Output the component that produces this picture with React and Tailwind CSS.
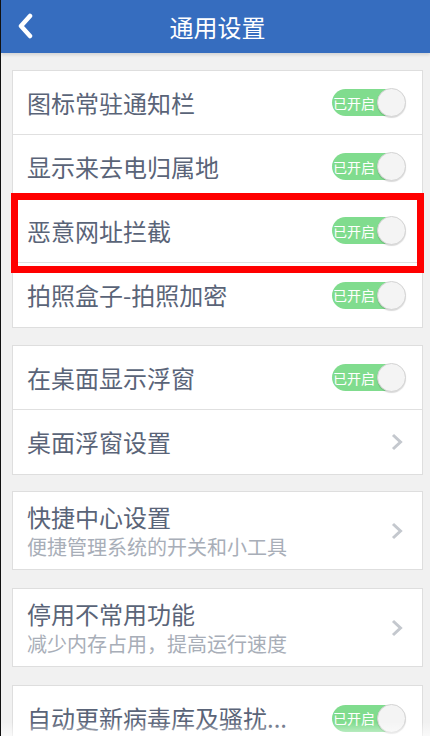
import React from "react";

const FONT = { fontFamily: '"Noto Sans CJK SC", "Noto Sans", sans-serif' };

function Toggle() {
  return (
    <div className="relative h-[29px] w-[74px]">
      <div className="absolute left-0 top-[1px] flex h-[27px] w-[72px] items-center rounded-full bg-[#80dc8e] pl-[1px]">
        <span className="text-[14px] leading-none text-white">已开启</span>
      </div>
      <div className="absolute right-0 top-0 h-[29px] w-[29px] rounded-full border border-[#d4d4d4] bg-[#f4f4f4] shadow-[0_1px_1px_rgba(0,0,0,0.15)]" />
    </div>
  );
}

function Chevron() {
  return (
    <svg width="14" height="18" viewBox="0 0 14 18" className="mr-[2px]">
      <path d="M3 2 L10.5 9 L3 16" fill="none" stroke="#c4c8ce" strokeWidth="3" />
    </svg>
  );
}

function Row({ title, sub, right, last }) {
  return (
    <div
      className={
        "flex items-center justify-between pl-[14px] pr-4 " +
        (sub ? "h-[77px] " : "h-[64px] ") +
        (last ? "" : "border-b border-[#e0e0e0]")
      }
    >
      <div className="flex flex-col gap-[4px]">
        <span className="text-[24px] leading-[28px] text-[#5a6478]">{title}</span>
        {sub && (
          <span className="text-[20px] leading-[24px] text-[#a8aeb8]">{sub}</span>
        )}
      </div>
      {right === "toggle" ? <Toggle /> : <Chevron />}
    </div>
  );
}

function Card({ children, className = "" }) {
  return (
    <div className={"ml-[11px] mr-[7px] border border-[#dedede] bg-white " + className}>
      {children}
    </div>
  );
}

export default function App() {
  return (
    <div
      className="relative h-[736px] w-[430px] overflow-hidden border-l-[1px] border-[#111] bg-[#f1f1f1]"
      style={FONT}
    >
      {/* header */}
      <div className="relative z-10 flex h-[53px] items-center justify-center bg-[#366dbf] shadow-[0_2px_3px_rgba(0,0,0,0.12)]">
        <svg
          width="20"
          height="26"
          viewBox="0 0 20 26"
          className="absolute left-[15px] top-[13px]"
        >
          <path d="M14 3 L5 13 L14 23" fill="none" stroke="#fff" strokeWidth="4.5" strokeLinecap="round" strokeLinejoin="round" />
        </svg>
        <span className="ml-[4px] text-[24px] text-white">通用设置</span>
      </div>

      <div className="flex flex-col pt-[17px]">
        <Card>
          <Row title="图标常驻通知栏" right="toggle" />
          <Row title="显示来去电归属地" right="toggle" />
          <Row title="恶意网址拦截" right="toggle" />
          <Row title="拍照盒子-拍照加密" right="toggle" last />
        </Card>

        <Card className="mt-[17px]">
          <Row title="在桌面显示浮窗" right="toggle" />
          <Row title="桌面浮窗设置" right="chevron" last />
        </Card>

        <Card className="mt-[16px]">
          <Row title="快捷中心设置" sub="便捷管理系统的开关和小工具" right="chevron" last />
        </Card>

        <Card className="mt-[18px]">
          <Row title="停用不常用功能" sub="减少内存占用，提高运行速度" right="chevron" last />
        </Card>

        <Card className="mt-[18px]">
          <Row title="自动更新病毒库及骚扰..." right="toggle" last />
        </Card>
      </div>

      {/* highlight frame */}
      <div className="absolute left-[10px] top-[193px] h-[80px] w-[413px] border-[7px] border-[#ff0000]" />

      {/* bottom fade */}
      <div className="absolute bottom-0 left-0 h-[14px] w-full bg-gradient-to-b from-transparent to-white/60" />
    </div>
  );
}
